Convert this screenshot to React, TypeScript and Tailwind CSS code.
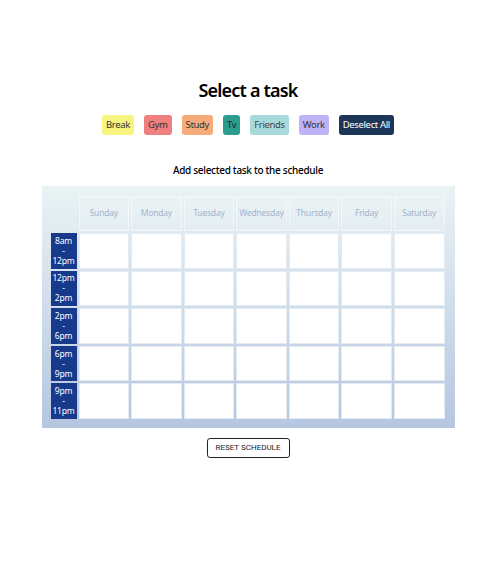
import React from "react";

const tasks = [
  { label: "Break", cls: "bg-[#f7f57f] text-[#333]" },
  { label: "Gym", cls: "bg-[#f07f7f] text-[#333]" },
  { label: "Study", cls: "bg-[#f6ab7b] text-[#333]" },
  { label: "Tv", cls: "bg-[#2a9d8f] text-[#222]" },
  { label: "Friends", cls: "bg-[#a8dadc] text-[#444]" },
  { label: "Work", cls: "bg-[#c0b2f6] text-[#333]" },
  { label: "Deselect All", cls: "bg-[#1d3557] text-white" },
];

const days = ["Sunday", "Monday", "Tuesday", "Wednesday", "Thursday", "Friday", "Saturday"];
const times = [
  ["8am", "12pm"],
  ["12pm", "2pm"],
  ["2pm", "6pm"],
  ["6pm", "9pm"],
  ["9pm", "11pm"],
];

export default function App() {
  return (
    <div
      className="w-[496px] h-[573px] bg-white flex flex-col items-center"
      style={{ fontFamily: '"Noto Sans", "Open Sans", sans-serif' }}
    >
      <h1 className="mt-[78px] text-[18px] leading-[25px] font-semibold text-black tracking-[-0.8px]">
        Select a task
      </h1>
      <div className="mt-[12px] flex gap-[10px]">
        {tasks.map((t) => (
          <button
            key={t.label}
            className={`h-[20px] px-[4px] rounded-[3px] text-[9.5px] leading-[20px] tracking-[-0.35px] ${t.cls}`}
          >
            {t.label}
          </button>
        ))}
      </div>
      <h2 className="mt-[27px] text-[10px] leading-[16px] font-medium text-black tracking-[-0.3px]">
        Add selected task to the schedule
      </h2>
      <div className="mt-[8px] w-[413px] pt-[10px] pb-[9px] pl-[9px] pr-[10px] bg-gradient-to-b from-[#eaf3f4] to-[#b6c6e1]">
        <div className="grid grid-cols-[26px_repeat(7,1fr)] grid-rows-[35px_repeat(5,35.6px)] gap-[2px]">
          <div />
          {days.map((d) => (
            <div
              key={d}
              className="border border-white/50 bg-white/10 flex items-center justify-center text-[8.5px] tracking-[-0.2px] text-[#a5b4cc]"
            >
              {d}
            </div>
          ))}
          {times.map(([a, b]) => (
            <div key={a} className="contents">
              <div className="bg-[#173a8c] text-white text-[8.5px] leading-[10px] tracking-[-0.2px] flex flex-col items-center justify-center">
                <span>{a}</span>
                <span>-</span>
                <span>{b}</span>
              </div>
              {days.map((d) => (
                <div key={d} className="bg-white border border-[#e4ebf2]" />
              ))}
            </div>
          ))}
        </div>
      </div>
      <button
        className="mt-[10px] w-[83px] h-[20px] border border-[#222] rounded-[3px] text-[8px] text-[#222] uppercase"
        style={{ fontFamily: "Roboto, sans-serif" }}
      >
        Reset Schedule
      </button>
    </div>
  );
}
